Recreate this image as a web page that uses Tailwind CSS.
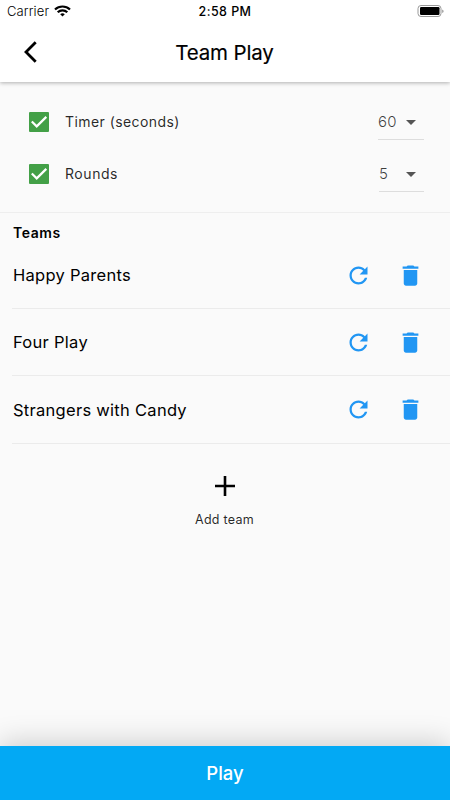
<!DOCTYPE html>
<html lang="en">
<head>
<meta charset="utf-8">
<title>Team Play</title>
<script src="https://cdn.jsdelivr.net/npm/@tailwindcss/browser@4"></script>
</head>
<body class="font-['Inter','Liberation_Sans',sans-serif] bg-[#fafafa] text-black">
<svg class="hidden">
  <symbol id="refresh" viewBox="0 0 24 24"><path d="M17.65 6.35C16.2 4.9 14.21 4 12 4c-4.42 0-7.99 3.58-7.99 8s3.57 8 7.99 8c3.73 0 6.84-2.55 7.73-6h-2.08c-.82 2.33-3.04 4-5.65 4-3.31 0-6-2.69-6-6s2.69-6 6-6c1.66 0 3.14.69 4.22 1.78L13 11h7V4l-2.35 2.35z"/></symbol>
  <symbol id="trash" viewBox="0 0 24 24"><path d="M6 19c0 1.1.9 2 2 2h8c1.100 0 2-.9 2-2V7H6v12zM19 4h-3.500l-1-1h-5l-1 1H5v2h14V4z"/></symbol>
</svg>
<div class="w-[450px] h-[800px] flex flex-col overflow-hidden">
  <header class="relative z-10 h-[82px] shrink-0 bg-white shadow-[0_1px_4px_rgba(0,0,0,0.3)]">
    <div class="h-[22px] grid grid-cols-3 items-center pl-[7px] pr-[6px]">
      <div class="flex items-center gap-[5px] text-[13px] leading-[22px]"><span class="tracking-[0.1px] font-light">Carrier</span>
        <svg class="w-[17px] h-[12px]" viewBox="0 0 17 12" fill="none" stroke="#000" stroke-width="2.200"><path d="M1 4.500C5.200.5 11.800.5 16 4.500M3.700 7.200c2.700-2.500 6.900-2.500 9.600 0"/><path d="M8.500 11.500 6.200 9.200c1.300-1.200 3.300-1.200 4.600 0z" fill="#000" stroke="none"/></svg>
      </div>
      <div class="text-center text-[12.5px] font-medium tracking-[0.45px] leading-[20px] pt-[2px] pr-px">2:58 PM</div>
      <svg class="justify-self-end w-[27px] h-[13px]" viewBox="0 0 27 13"><rect x="1" y=".5" width="23" height="11" rx="3" fill="none" stroke="#999"/><rect x="3" y="2" width="19.500" height="8" rx="1.200"/><path d="M25.500 4.500c1.200.5 1.200 3 0 3.500z" fill="#555"/></svg>
    </div>
    <div class="h-[60px] grid grid-cols-[60px_1fr_60px] items-center">
      <svg class="w-[16px] h-[22px] ml-[22px]" viewBox="0 0 16 22" fill="none" stroke="#000" stroke-width="2.800"><path d="M13.700 1.300 4 11l9.700 9.700"/></svg>
      <h1 class="text-center text-[20.5px] leading-[58px] pt-[2px] tracking-[-0.15px] font-normal pr-px [-webkit-text-stroke:0.15px_black]">Team Play</h1>
    </div>
  </header>

  <section class="h-[131px] shrink-0 border-b border-[#eeeeee] pl-[29px] pr-[26px] pt-[14px] text-[14px] text-black/85">
    <div class="h-[52px] flex items-center">
      <svg class="w-[20px] h-[20px]" viewBox="0 0 20 20"><rect width="20" height="20" rx="1" fill="#43a047"/><path d="M2.800 9.500 7.700 14.400 17.300 4.900" fill="none" stroke="#fff" stroke-width="2.200"/></svg>
      <span class="ml-[16px] flex-1 tracking-[0.43px] pb-[2px]">Timer (seconds)</span>
      <div class="w-[46px] h-[36px] border-b border-[#dddddd] flex items-center justify-between pr-[8px] text-[15px] font-light text-black/75"><span class="tracking-[0.3px] pt-px">60</span><svg class="w-[10px] h-[5px] mt-px" viewBox="0 0 10 5"><path d="M0 0h10L5 5z" fill="#555"/></svg></div>
    </div>
    <div class="h-[52px] flex items-center">
      <svg class="w-[20px] h-[20px]" viewBox="0 0 20 20"><rect width="20" height="20" rx="1" fill="#43a047"/><path d="M2.800 9.500 7.700 14.400 17.300 4.900" fill="none" stroke="#fff" stroke-width="2.200"/></svg>
      <span class="ml-[16px] flex-1 tracking-[0.55px] pb-[2px]">Rounds</span>
      <div class="w-[45px] h-[36px] border-b border-[#dddddd] flex items-center justify-between pr-[8px] text-[15px] font-light text-black/75"><span class="pt-[2px]">5</span><svg class="w-[10px] h-[5px] mt-[2px]" viewBox="0 0 10 5"><path d="M0 0h10L5 5z" fill="#555"/></svg></div>
    </div>
  </section>

  <section class="shrink-0 pl-[12px]">
    <h2 class="h-[28px] pt-[10px] pl-px text-[14px] leading-[20px] font-semibold tracking-[0.55px]">Teams</h2>
    <div class="h-[68px] border-b border-[#ebebeb] flex items-center pl-px pr-[26px] text-[16.5px]"><span class="flex-1 tracking-[0.28px] pt-[2px]">Happy Parents</span><svg class="w-[27px] h-[27px] fill-[#2196f3] mr-[25px] mt-px"><use href="#refresh"/></svg><svg class="w-[27px] h-[27px] fill-[#2196f3] mt-px"><use href="#trash"/></svg></div>
    <div class="h-[67px] border-b border-[#ebebeb] flex items-center pl-px pr-[26px] text-[16.5px]"><span class="flex-1 tracking-[0.28px]">Four Play</span><svg class="w-[27px] h-[27px] fill-[#2196f3] mr-[25px]"><use href="#refresh"/></svg><svg class="w-[27px] h-[27px] fill-[#2196f3]"><use href="#trash"/></svg></div>
    <div class="h-[68px] border-b border-[#ebebeb] flex items-center pl-px pr-[26px] text-[16.5px]"><span class="flex-1 tracking-[0.28px] pt-[2px]">Strangers with Candy</span><svg class="w-[27px] h-[27px] fill-[#2196f3] mr-[25px]"><use href="#refresh"/></svg><svg class="w-[27px] h-[27px] fill-[#2196f3]"><use href="#trash"/></svg></div>
  </section>

  <div class="flex-1 flex flex-col items-center pt-[32px]">
    <svg class="w-[20px] h-[20px]" viewBox="0 0 20 20"><path d="M10 0v20M0 10h20" stroke="#000" stroke-width="2.600"/></svg>
    <span class="mt-[14px] pr-px text-[12.5px] leading-[20px] tracking-[0.25px] text-black/85">Add team</span>
  </div>

  <button class="h-[54px] shrink-0 bg-[#03a9f4] text-white text-[18.5px] pt-[2px] font-medium shadow-[0_-4px_28px_rgba(0,0,0,0.18)]">Play</button>
</div>
</body>
</html>
